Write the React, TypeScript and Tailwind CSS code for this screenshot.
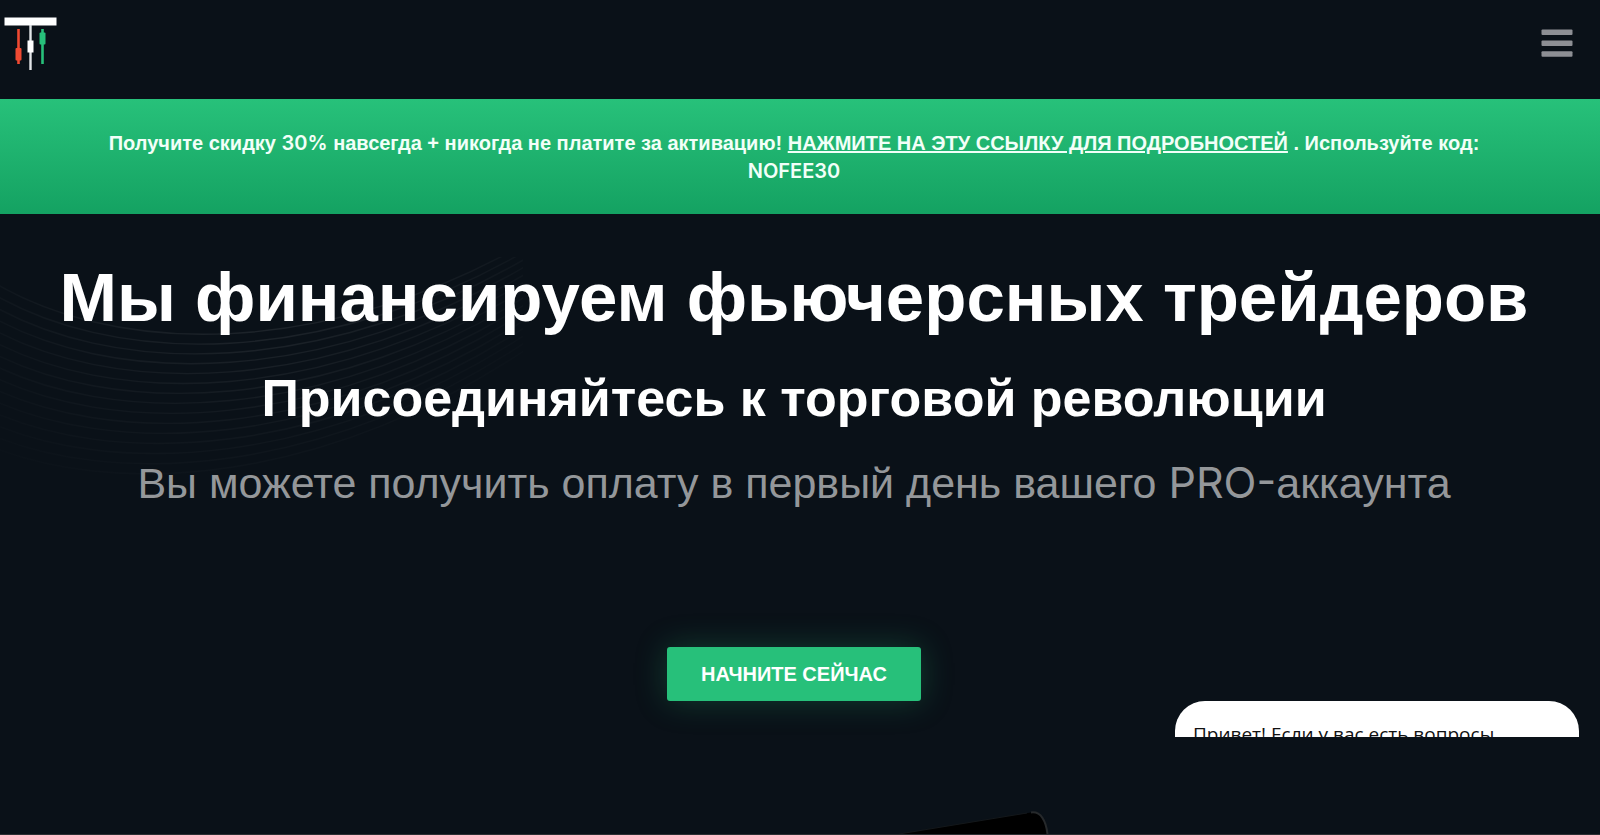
import type { ReactNode } from "react"

const waveLines = Array.from({ length: 15 }, (_, i) => i)

const Latin = ({ children }: { children: ReactNode }) => <span className="font-['Inter',sans-serif]">{children}</span>

const Logo = () => (
  <svg viewBox="0 0 54 54" className="h-[54px] w-[54px]" aria-hidden="true">
    <rect x="0.5" y="0.5" width="52" height="8" fill="#fff" />
    <path d="M26.5 8V53" stroke="#e2e5e8" strokeWidth="2.4" />
    <rect x="23.5" y="23.5" width="6" height="12" fill="#fff" />
    <path d="M14.5 12V47" stroke="#f04a32" strokeWidth="2.6" />
    <rect x="11.5" y="31" width="6" height="12.5" rx="1" fill="#f04a32" />
    <path d="M38.5 12V47" stroke="#27c07a" strokeWidth="2.6" />
    <rect x="35.5" y="15.5" width="6" height="12" rx="1" fill="#27c07a" />
  </svg>
)

const Header = () => (
  <header className="flex h-[99px] items-start justify-between pt-[17px] pr-[27px] pl-1">
    <a href="#" aria-label="Главная">
      <Logo />
    </a>
    <button type="button" aria-label="Меню" className="mt-3 h-7 w-8">
      <svg viewBox="0 0 32 28" className="h-7 w-8 fill-[#8d8f94]">
        <rect x="0.5" y="0.5" width="31" height="5.5" rx="1" />
        <rect x="0.5" y="11.5" width="31" height="5.5" rx="1" />
        <rect x="0.5" y="22.3" width="31" height="5.5" rx="1" />
      </svg>
    </button>
  </header>
)

const PromoBanner = () => (
  <div className="bg-linear-to-b from-[#27c17a] to-[#14a262] px-20 pt-[30px] pb-[29px] text-center text-xl leading-7 font-bold text-[#f2fff8]">
    <p className="pr-3">
      Получите скидку{" "}
      <span className="font-semibold">
        <Latin>30%</Latin>
      </span>{" "}
      навсегда + никогда не платите за активацию!{" "}
      <a href="#" className="underline">
        НАЖМИТЕ НА ЭТУ ССЫЛКУ ДЛЯ ПОДРОБНОСТЕЙ
      </a>{" "}
      . Используйте код:{" "}
      <span className="font-semibold">
        <Latin>NOFEE30</Latin>
      </span>
    </p>
  </div>
)

const Waves = () => (
  <svg viewBox="0 0 523 220" className="absolute top-[43px] left-0 h-[220px] w-[523px]" fill="none" aria-hidden="true">
    <defs>
      <radialGradient id="fade" gradientUnits="userSpaceOnUse" cx="270" cy="80" r="330">
        <stop offset="0" stopColor="#fff" stopOpacity="0.08" />
        <stop offset="0.5" stopColor="#fff" stopOpacity="0.05" />
        <stop offset="1" stopColor="#fff" stopOpacity="0.01" />
      </radialGradient>
    </defs>
    <g stroke="url(#fade)" strokeWidth="1.4">
      {waveLines.map((i) => (
        <path
          key={i}
          d={`M-20 ${17 + 12 * i} C110 ${103 + 10 * i} 330 ${103 + 9 * i} 540 ${-22 + 7.5 * i}`}
          opacity={1 - i * 0.05}
        />
      ))}
    </g>
  </svg>
)

const Tablet = () => (
  <svg viewBox="0 0 170 24" className="h-6 w-[170px]" aria-hidden="true">
    <path d="M14 24 L146 2.5 Q160 0 162.5 24Z" fill="#000" />
    <path d="M14 24 L142 3" stroke="#14181b" />
    <path d="M146 2.5 C156 1 161 11 162.5 24" fill="none" stroke="#26292b" strokeWidth="2" />
  </svg>
)

const Hero = () => (
  <main className="relative flex flex-1 flex-col items-center border-b border-[#2c2f33] pr-3">
    <Waves />
    <h1 className="relative mt-11 text-center text-[69px] leading-[80px] font-bold text-white">
      Мы финансируем фьючерсных трейдеров
    </h1>
    <h2 className="relative mt-7 text-center text-[52px] leading-[64px] font-bold text-white">
      Присоединяйтесь к торговой революции
    </h2>
    <p className="relative mt-6 text-center text-[43px] leading-[56px] text-[#94979a]">
      Вы можете получить оплату в первый день вашего <Latin>PRO-</Latin>аккаунта
    </p>
    <button
      type="button"
      className="mt-34 h-[54px] rounded-[3px] bg-[#27c07a] px-[34px] text-xl font-bold text-white shadow-[0_0_32px_rgba(39,192,122,0.25)]"
    >
      НАЧНИТЕ СЕЙЧАС
    </button>
    <div className="mt-auto pl-[352px]">
      <Tablet />
    </div>
  </main>
)

const ChatTeaser = () => (
  <aside className="absolute right-[21px] bottom-[98px] h-9 w-[404px] overflow-hidden rounded-t-[30px] bg-white px-[18px] pt-5 font-['Open_Sans','Noto_Sans',sans-serif] text-[19px] leading-[26px] text-[#111]">
    Привет! Если у вас есть вопросы
  </aside>
)

const App = () => {
  return (
    <div className="relative flex min-h-screen flex-col overflow-hidden bg-[#0a1118] font-['Liberation_Sans',Arial,sans-serif]">
      <Header />
      <PromoBanner />
      <Hero />
      <ChatTeaser />
    </div>
  )
}

export default App
